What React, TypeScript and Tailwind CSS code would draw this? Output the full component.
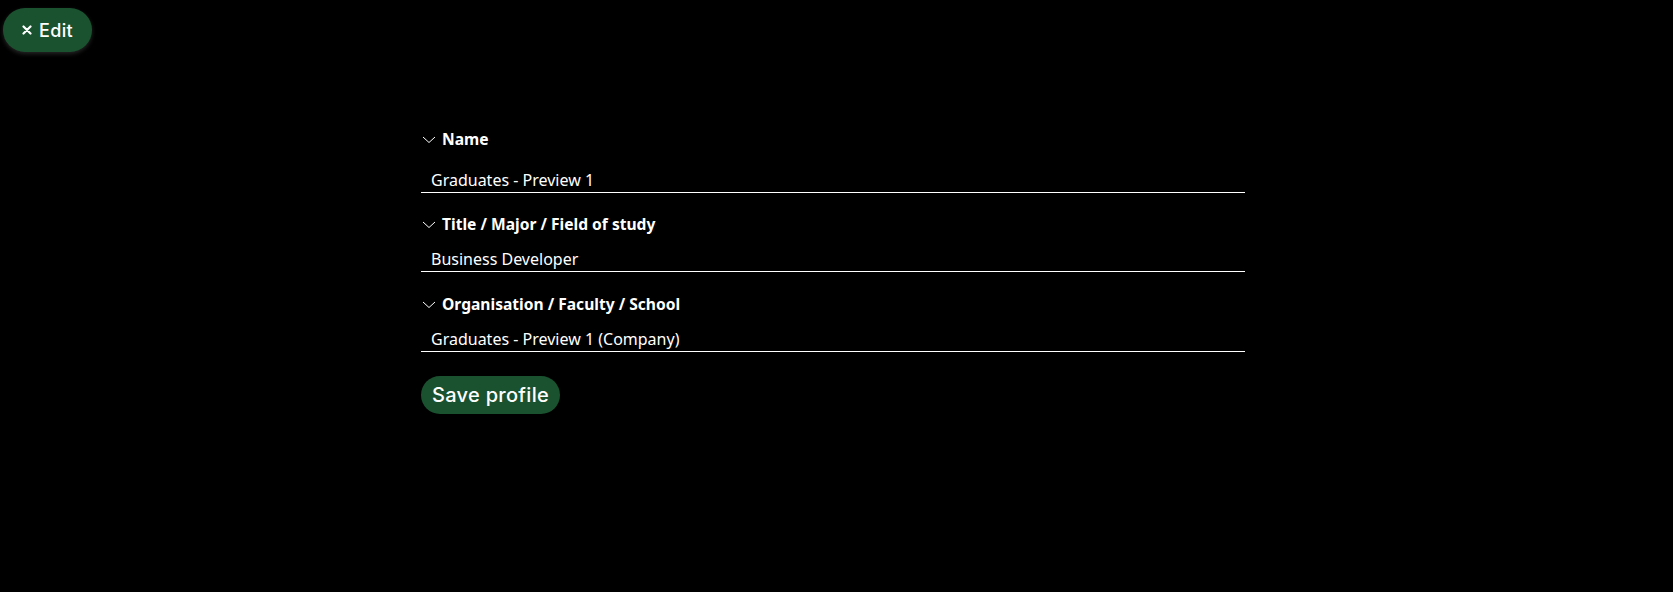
import React, { useState } from 'react'

const Chevron = () => (
    <svg width="14" height="8" viewBox="0 0 14 8" fill="none" className="shrink-0">
        <polyline points="1,1 7,6.5 13,1" stroke="white" strokeWidth="1" />
    </svg>
)

const Field = ({
    label,
    value,
    gap,
}: {
    label: string
    value: string
    gap: string
}) => {
    const [text, setText] = useState(value)
    return (
        <div className="flex flex-col">
            <div className="flex h-5 items-center gap-[6px] pl-px">
                <Chevron />
                <span className="text-[15.6px] font-bold text-white">{label}</span>
            </div>
            <input
                value={text}
                onChange={(e) => setText(e.target.value)}
                className={`${gap} h-[26px] w-full border-b border-white bg-transparent pl-[10px] text-[16px] text-white outline-none`}
            />
        </div>
    )
}

export default function App() {
    return (
        <div
            className="min-h-[592px] w-full bg-black"
            style={{ fontFamily: '"Noto Sans", sans-serif' }}
        >
            <div className="pl-[3px] pt-[8px]">
                <button
                    className="flex h-[44px] w-[89px] items-center justify-center gap-[7px] rounded-full bg-[#1a5230] text-[18px] font-medium tracking-[0.3px] text-white shadow-[0_2px_4px_rgba(60,60,60,0.6)]"
                    style={{ fontFamily: 'Inter, sans-serif' }}
                >
                    <svg width="10" height="10" viewBox="0 0 10 10">
                        <path d="M1.5 1.5 L8.5 8.5 M8.5 1.5 L1.5 8.5" stroke="white" strokeWidth="2.2" strokeLinecap="round" />
                    </svg>
                    Edit
                </button>
            </div>
            <div className="ml-[421px] mt-[78px] flex w-[824px] flex-col">
                <Field label="Name" value="Graduates - Preview 1" gap="mt-[17px]" />
                <div className="mt-[22px]">
                    <Field label="Title / Major / Field of study" value="Business Developer" gap="mt-[11px]" />
                </div>
                <div className="mt-[23px]">
                    <Field
                        label="Organisation / Faculty / School"
                        value="Graduates - Preview 1 (Company)"
                        gap="mt-[11px]"
                    />
                </div>
                <div className="mt-[24px]">
                    <button
                        className="h-[38px] rounded-full bg-[#1a5230] px-[11px] text-[20px] font-medium tracking-[0.3px] text-white"
                        style={{ fontFamily: 'Inter, sans-serif' }}
                    >
                        Save profile
                    </button>
                </div>
            </div>
        </div>
    )
}
